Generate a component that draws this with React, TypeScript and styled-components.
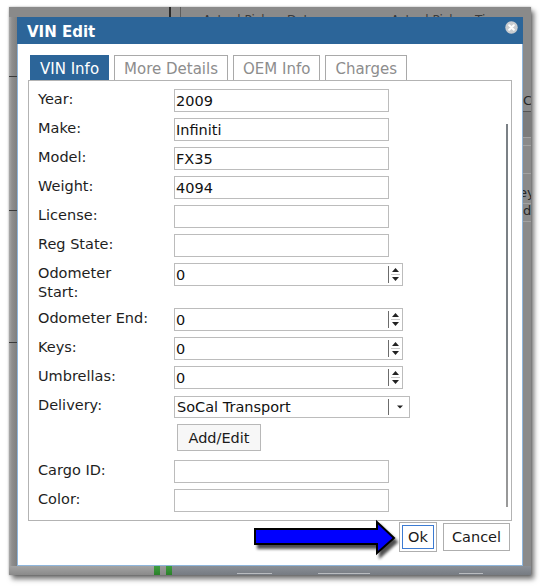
import React from "react";
import styled, { createGlobalStyle } from "styled-components";

const GlobalStyle = createGlobalStyle`
  html, body { margin: 0; padding: 0; background: #ffffff; }
  body { font-family: "DejaVu Sans", Verdana, sans-serif; }
  *, *::before, *::after { box-sizing: border-box; }
`;

const FONT = `"DejaVu Sans", Verdana, sans-serif`;

const Canvas = styled.div`
  width: 540px;
  height: 587px;
  padding: 7px 0 0 9px;
  background: #ffffff;
  overflow: hidden;
`;

const Backdrop = styled.div`
  position: relative;
  width: 522px;
  height: 568px;
  background: #8a8a8a;
  box-shadow: 0 0 2px rgba(0, 0, 0, 0.3), 3px 4px 5px rgba(0, 0, 0, 0.55);
`;

/* ---------- page behind the modal ---------- */
const Page = styled.div`
  display: flex;
  flex-direction: column;
  width: 100%;
  height: 100%;
`;

const PageHeader = styled.div`
  flex: none;
  height: 10px;
  display: flex;
`;

const HeaderCell = styled.div<{ $w?: number; $line?: string; $pad?: number }>`
  flex: ${(p) => (p.$w ? "none" : "1")};
  width: ${(p) => (p.$w ? `${p.$w}px` : "auto")};
  border-right: ${(p) => p.$line ?? "none"};
  padding: 6px 0 0 ${(p) => p.$pad ?? 0}px;
  font-family: ${FONT};
  font-size: 12px;
  line-height: 14px;
  color: #3a3a3a;
  white-space: nowrap;
`;

const PageMiddle = styled.div`
  flex: 1;
  display: flex;
`;

const EdgeColumn = styled.div`
  flex: none;
  width: 8px;
  display: flex;
  flex-direction: column;
  overflow: hidden;
`;

const LeftEdge = styled(EdgeColumn)`
  background: linear-gradient(to right, #a9a9a9 0px, #8e8e8e 3px, #7f7f7f 8px);
`;

const Spacer = styled.div`
  flex: 1;
`;

const EdgeSeg = styled.div<{ $h: number; $line?: string; $bg?: string; $shift?: number }>`
  flex: none;
  height: ${(p) => p.$h}px;
  border-bottom: ${(p) => p.$line ?? "none"};
  background: ${(p) => p.$bg ?? "transparent"};
  display: flex;
  align-items: flex-end;
  padding-bottom: 3px;
  margin-left: ${(p) => p.$shift ?? 0}px;
  font-family: ${FONT};
  font-size: 13px;
  line-height: 14px;
  color: #262626;
  white-space: nowrap;
`;

const BottomStrip = styled.div`
  flex: none;
  height: 9px;
  display: flex;
`;

const StripPart = styled.div<{ $w?: number; $bg: string }>`
  flex: ${(p) => (p.$w ? "none" : "1")};
  width: ${(p) => (p.$w ? `${p.$w}px` : "auto")};
  background: ${(p) => p.$bg};
  display: flex;
  align-items: flex-end;
`;

const StripLine = styled.div<{ $ml: number; $w: number }>`
  flex: none;
  margin-left: ${(p) => p.$ml}px;
  width: ${(p) => p.$w}px;
  height: 1px;
  margin-bottom: 1px;
  background: #b9bcc0;
`;

/* ---------- modal dialog ---------- */
const Dialog = styled.div`
  position: absolute;
  left: 8px;
  top: 10px;
  width: 506px;
  height: 549px;
  background: #ffffff;
  border: 1px solid #8fb6dc;
  display: flex;
  flex-direction: column;
`;

const TitleBar = styled.div`
  flex: none;
  margin: -1px -1px 0 -1px;
  height: 27px;
  background: #2c6599;
  display: flex;
  align-items: flex-start;
  justify-content: space-between;
  padding: 0 5px 0 10px;
`;

const Title = styled.div`
  padding-top: 3px;
  font-family: ${FONT};
  font-weight: bold;
  font-size: 15px;
  line-height: 24px;
  color: #ffffff;
`;

const CloseBtn = styled.div`
  width: 13px;
  height: 13px;
  margin-top: 4px;
  display: flex;
`;

const Body = styled.div`
  flex: 1;
  display: flex;
  flex-direction: column;
  padding: 11px 10px 0 10px;
`;

const TabRow = styled.div`
  flex: none;
  display: flex;
  gap: 5px;
  padding-left: 2px;
  height: 25px;
`;

const Tab = styled.div<{ $active?: boolean }>`
  height: 25px;
  padding: 2px 9px 0 9px;
  border: 1px solid ${(p) => (p.$active ? "#2c6599" : "#a9a9a9")};
  border-bottom: none;
  background: ${(p) => (p.$active ? "#2c6599" : "#ffffff")};
  color: ${(p) => (p.$active ? "#ffffff" : "#8d8d8d")};
  font-family: ${FONT};
  font-size: 15px;
  line-height: 22px;
  white-space: nowrap;
`;

const Panel = styled.div`
  flex: none;
  height: 441px;
  border: 1px solid #b3b3b3;
  display: flex;
  overflow: hidden;
`;

const Form = styled.div`
  flex: 1;
  display: grid;
  grid-template-columns: 136px 1fr;
  grid-auto-rows: min-content;
  row-gap: 6px;
  align-content: start;
  padding: 8px 0 0 9px;
`;

const Label = styled.div`
  padding-top: 1px;
  font-family: ${FONT};
  font-size: 14.5px;
  line-height: 19px;
  color: #1e1e1e;
  white-space: nowrap;
`;

const Cell = styled.div<{ $extra?: number }>`
  display: flex;
  margin-bottom: ${(p) => p.$extra ?? 0}px;
`;

const TextInput = styled.input`
  width: 215px;
  height: 23px;
  margin: 0;
  border: 1px solid #bcbcbc;
  padding: 0 1px;
  font-family: ${FONT};
  font-size: 14.5px;
  color: #111111;
  background: #ffffff;
  outline: none;
`;

const SpinBox = styled.div`
  width: 229px;
  height: 23px;
  border: 1px solid #bcbcbc;
  display: flex;
  background: #ffffff;
`;

const BareInput = styled.input`
  flex: 1;
  min-width: 0;
  height: 100%;
  margin: 0;
  border: none;
  padding: 0 1px;
  font-family: ${FONT};
  font-size: 14.5px;
  color: #111111;
  background: transparent;
  outline: none;
`;

const SpinButtons = styled.div`
  flex: none;
  width: 14px;
  display: flex;
`;

const SelectBox = styled.div`
  width: 236px;
  height: 22px;
  margin-top: 1px;
  border: 1px solid #bcbcbc;
  display: flex;
  align-items: center;
  background: #ffffff;
`;

const SelectText = styled.div`
  flex: 1;
  padding-left: 2px;
  font-family: ${FONT};
  font-size: 14.5px;
  line-height: 20px;
  color: #111111;
`;

const SelectArrow = styled.div`
  flex: none;
  width: 21px;
  height: 100%;
  display: flex;
`;

const SmallButton = styled.button`
  margin: 0 0 0 3px;
  width: 84px;
  height: 27px;
  border: 1px solid #b8b8b8;
  background: #f7f7f7;
  padding: 0;
  font-family: ${FONT};
  font-size: 14.5px;
  color: #1a1a1a;
`;

const ScrollColumn = styled.div`
  flex: none;
  width: 5px;
  padding: 43px 0 13px 0;
  display: flex;
`;

const ScrollThumb = styled.div`
  width: 2px;
  background: linear-gradient(to bottom, #7b8186 0%, #7b8186 55%, #9a9a9a 100%);
`;

const Footer = styled.div`
  flex: 1;
  display: flex;
  justify-content: flex-end;
  align-items: flex-start;
  padding: 1px 2px 0 0;
`;

const ArrowWrap = styled.div`
  flex: none;
  width: 147px;
  height: 42px;
  margin-top: -3px;
  display: flex;
`;

const ButtonGroup = styled.div`
  display: flex;
  align-items: center;
  gap: 6px;
  height: 30px;
`;

const DialogButton = styled.button<{ $focused?: boolean; $w: number }>`
  margin: 0;
  padding: 0;
  width: ${(p) => p.$w}px;
  height: ${(p) => (p.$focused ? 30 : 28)}px;
  border: 1px solid #aeaeae;
  background: #ffffff;
  font-family: ${FONT};
  font-size: 14.5px;
  color: #1a1a1a;
  outline: ${(p) => (p.$focused ? "1px solid #3c7bd2" : "none")};
  outline-offset: -4px;
`;

/* ---------- icons ---------- */
const CloseIcon = () => (
  <svg width="13" height="13" viewBox="0 0 13 13">
    <circle cx="6.5" cy="6.5" r="6.2" fill="#c9ccd0" />
    <path d="M4.2 4.2 L8.8 8.8 M8.8 4.2 L4.2 8.8" stroke="#ffffff" strokeWidth="2" strokeLinecap="round" />
  </svg>
);

const SpinIcon = () => (
  <svg width="14" height="21" viewBox="0 0 14 21">
    <line x1="0.5" y1="2" x2="0.5" y2="19" stroke="#6c6c6c" strokeWidth="1" />
    <path d="M4 8 L7.5 4 L11 8 Z" fill="#222" />
    <line x1="3" y1="10.5" x2="12" y2="10.5" stroke="#c9c9c9" strokeWidth="1" />
    <path d="M4 13 L7.5 17 L11 13 Z" fill="#222" />
  </svg>
);

const SelectIcon = () => (
  <svg width="21" height="20" viewBox="0 0 21 20">
    <line x1="0.5" y1="2" x2="0.5" y2="18" stroke="#6c6c6c" strokeWidth="1" />
    <path d="M9 8.5 L15 8.5 L12 11.5 Z" fill="#222" />
  </svg>
);

const BigArrow = () => (
  <svg width="147" height="42" viewBox="0 0 147 42">
    <defs>
      <filter id="arrowShadow" x="-10%" y="-30%" width="130%" height="180%">
        <feGaussianBlur in="SourceAlpha" stdDeviation="1.8" />
        <feOffset dx="3" dy="4" result="off" />
        <feComponentTransfer>
          <feFuncA type="linear" slope="0.7" />
        </feComponentTransfer>
        <feMerge>
          <feMergeNode />
          <feMergeNode in="SourceGraphic" />
        </feMerge>
      </filter>
    </defs>
    <polygon
      points="3,10 125,10 125,3 142,19 125,34 125,25 3,25"
      fill="#0000ff"
      stroke="#000000"
      strokeWidth="2"
      strokeLinejoin="miter"
      filter="url(#arrowShadow)"
    />
  </svg>
);

/* ---------- data ---------- */
type Field = {
  label: React.ReactNode;
  kind: "text" | "spin" | "select" | "button";
  value: string;
};

const fields: Field[] = [
  { label: "Year:", kind: "text", value: "2009" },
  { label: "Make:", kind: "text", value: "Infiniti" },
  { label: "Model:", kind: "text", value: "FX35" },
  { label: "Weight:", kind: "text", value: "4094" },
  { label: "License:", kind: "text", value: "" },
  { label: "Reg State:", kind: "text", value: "" },
  { label: <>Odometer<br />Start:</>, kind: "spin", value: "0" },
  { label: "Odometer End:", kind: "spin", value: "0" },
  { label: "Keys:", kind: "spin", value: "0" },
  { label: "Umbrellas:", kind: "spin", value: "0" },
  { label: "Delivery:", kind: "select", value: "SoCal Transport" },
  { label: "", kind: "button", value: "Add/Edit" },
  { label: "Cargo ID:", kind: "text", value: "" },
  { label: "Color:", kind: "text", value: "" },
];

const tabs = ["VIN Info", "More Details", "OEM Info", "Charges"];

const renderControl = (f: Field) => {
  switch (f.kind) {
    case "text":
      return <TextInput readOnly value={f.value} />;
    case "spin":
      return (
        <SpinBox>
          <BareInput readOnly value={f.value} />
          <SpinButtons>
            <SpinIcon />
          </SpinButtons>
        </SpinBox>
      );
    case "select":
      return (
        <SelectBox>
          <SelectText>{f.value}</SelectText>
          <SelectArrow>
            <SelectIcon />
          </SelectArrow>
        </SelectBox>
      );
    case "button":
      return <SmallButton type="button">{f.value}</SmallButton>;
  }
};

export default function App() {
  return (
    <>
      <GlobalStyle />
      <Canvas>
        <Backdrop>
          <Page>
            <PageHeader>
              <HeaderCell $w={162} $line="2px solid #2a2a2a" />
              <HeaderCell $w={10} $line="1px solid #5e5e5e" />
              <HeaderCell $w={210} $pad={22}>Actual Pickup Date</HeaderCell>
              <HeaderCell>Actual Pickup Time</HeaderCell>
            </PageHeader>
            <PageMiddle>
              <LeftEdge>
                <EdgeSeg $h={60} $line="1px solid #3a3a3a" />
                <EdgeSeg $h={134} $line="1px solid #3a3a3a" />
                <EdgeSeg $h={132} $line="1px solid #3a3a3a" />
              </LeftEdge>
              <Spacer />
              <EdgeColumn>
                <EdgeSeg $h={95} $line="1px solid #555555">C</EdgeSeg>
                <EdgeSeg $h={26} $bg="#7c7c7c" $line="1px solid #a2a2a2" />
                <EdgeSeg $h={8} $line="1px solid #a2a2a2" />
                <EdgeSeg $h={28} $line="1px solid #a2a2a2" />
                <EdgeSeg $h={30} $shift={-4} $line="1px solid #a2a2a2">ey</EdgeSeg>
                <EdgeSeg $h={18} $line="1px solid #a2a2a2">d</EdgeSeg>
              </EdgeColumn>
            </PageMiddle>
            <BottomStrip>
              <StripPart $w={145} $bg="linear-gradient(#a4a4a4, #8a8a8a)" />
              <StripPart $w={6} $bg="linear-gradient(#3f9e3f, #2a802a)" />
              <StripPart $w={6} $bg="linear-gradient(#9a9a9a, #888888)" />
              <StripPart $w={6} $bg="linear-gradient(#3f9e3f, #2a802a)" />
              <StripPart $bg="linear-gradient(#8b9097, #767b82)">
                <StripLine $ml={65} $w={35} />
                <StripLine $ml={46} $w={52} />
                <StripLine $ml={89} $w={24} />
              </StripPart>
            </BottomStrip>
          </Page>

          <Dialog>
            <TitleBar>
              <Title>VIN Edit</Title>
              <CloseBtn>
                <CloseIcon />
              </CloseBtn>
            </TitleBar>
            <Body>
              <TabRow>
                {tabs.map((t, i) => (
                  <Tab key={t} $active={i === 0}>
                    {t}
                  </Tab>
                ))}
              </TabRow>
              <Panel>
                <Form>
                  {fields.map((f, i) => (
                    <React.Fragment key={i}>
                      <Label>{f.label}</Label>
                      <Cell $extra={f.kind === "button" ? 3 : 0}>{renderControl(f)}</Cell>
                    </React.Fragment>
                  ))}
                </Form>
                <ScrollColumn>
                  <ScrollThumb />
                </ScrollColumn>
              </Panel>
              <Footer>
                <ArrowWrap>
                  <BigArrow />
                </ArrowWrap>
                <ButtonGroup>
                  <DialogButton type="button" $focused $w={38}>
                    Ok
                  </DialogButton>
                  <DialogButton type="button" $w={67}>
                    Cancel
                  </DialogButton>
                </ButtonGroup>
              </Footer>
            </Body>
          </Dialog>
        </Backdrop>
      </Canvas>
    </>
  );
}
